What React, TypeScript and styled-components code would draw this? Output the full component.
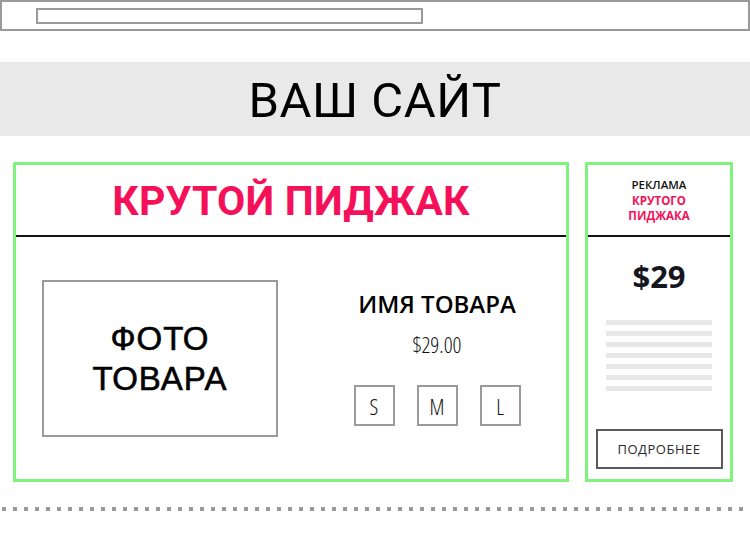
import React from "react"
import styled, { createGlobalStyle } from "styled-components"

const GlobalStyle = createGlobalStyle`
  html, body {
    margin: 0;
    padding: 0;
    background: #fff;
  }
  body {
    width: 750px;
    font-family: Roboto, "Open Sans", sans-serif;
  }
  * {
    box-sizing: border-box;
  }
`

const pink = "#f5115a"
const green = "#82f27f"

const Page = styled.div`
  width: 750px;
  display: flex;
  flex-direction: column;
`

const TopBar = styled.div`
  height: 31px;
  border: 2px solid #9a9a9a;
  padding: 6px 0 0 34px;
`

const AddressField = styled.div`
  width: 387px;
  height: 16px;
  border: 2px solid #9a9a9a;
`

const Hero = styled.header`
  margin-top: 31px;
  height: 74px;
  background: #e9e9e9;
  display: flex;
  align-items: center;
  justify-content: center;
  font-family: Roboto, sans-serif;
  font-size: 49px;
  font-weight: 400;
  color: #000;
  letter-spacing: 0.5px;
  padding-top: 2px;
`

const Row = styled.div`
  margin: 26px 0 0 13px;
  display: flex;
  gap: 16px;
`

const Card = styled.section<{ $width: number }>`
  width: ${p => p.$width}px;
  height: 320px;
  border: 3px solid ${green};
  display: flex;
  flex-direction: column;
`

const CardHead = styled.div`
  height: 72px;
  border-bottom: 2px solid #111;
  display: flex;
  flex-direction: column;
  align-items: center;
  justify-content: center;
  text-align: center;
`

const Title = styled.h1`
  margin: 0;
  font-family: Roboto, sans-serif;
  font-size: 41px;
  font-weight: 700;
  color: ${pink};
  letter-spacing: 0.2px;
  padding-top: 2px;
`

const ProductBody = styled.div`
  display: flex;
  padding: 43px 0 0 26px;
`

const Photo = styled.div`
  width: 236px;
  height: 157px;
  border: 2px solid #9a9a9a;
  display: flex;
  align-items: center;
  justify-content: center;
  text-align: center;
  font-family: "Liberation Sans", Arial, sans-serif;
  font-size: 33px;
  font-weight: 400;
  line-height: 40px;
  letter-spacing: 1px;
  color: #000;
  -webkit-text-stroke: 0.6px #000;
`

const Info = styled.div`
  width: 200px;
  margin-left: 59px;
  display: flex;
  flex-direction: column;
  align-items: center;
  padding-top: 8px;
`

const ProductName = styled.div`
  font-family: "Open Sans", sans-serif;
  font-size: 24px;
  font-weight: 600;
  line-height: 32px;
  color: #000;
`

const Price = styled.div`
  margin-top: 11px;
  font-family: "Open Sans", sans-serif;
  font-stretch: 80%;
  font-size: 22px;
  font-weight: 300;
  line-height: 26px;
  color: #111;
`

const Sizes = styled.div`
  margin-top: 28px;
  display: flex;
  gap: 22px;
`

const SizeBox = styled.div`
  width: 41px;
  height: 41px;
  border: 2px solid #9a9a9a;
  display: flex;
  align-items: center;
  justify-content: center;
  font-family: "Open Sans", sans-serif;
  font-stretch: 80%;
  font-size: 22px;
  font-weight: 300;
  color: #111;
`

const AdTitle = styled.div`
  font-family: "Open Sans", sans-serif;
  font-size: 11.5px;
  line-height: 15.7px;
  font-weight: 600;
  color: #111;
  padding-top: 1px;
`

const Accent = styled.span`
  font-weight: 700;
  color: ${pink};
`

const AdBody = styled.div`
  flex: 1;
  display: flex;
  flex-direction: column;
  align-items: center;
  padding-top: 20px;
`

const AdPrice = styled.div`
  font-family: "Open Sans", sans-serif;
  font-stretch: 90%;
  font-size: 31px;
  font-weight: 700;
  line-height: 38px;
  color: #16161f;
`

const TextLines = styled.div`
  margin-top: 25px;
  width: 106px;
  display: flex;
  flex-direction: column;
  gap: 6px;
`

const TextLine = styled.div`
  height: 5px;
  background: #e8e8e8;
`

const MoreButton = styled.button`
  margin-top: 38px;
  width: 127px;
  height: 40px;
  background: #fff;
  border: 2px solid #5a5a5a;
  font-family: "Open Sans", sans-serif;
  font-size: 13px;
  font-weight: 500;
  color: #2a2a2a;
  letter-spacing: 0.5px;
  padding: 0;
`

const Dotted = styled.div`
  margin: 25px 0 0 2px;
  height: 4px;
  background: repeating-linear-gradient(
    to right,
    #999 0 4px,
    transparent 4px 11px
  );
`

const sizes = ["S", "M", "L"]

const App = (): JSX.Element => {
  return (
    <Page>
      <GlobalStyle />
      <TopBar>
        <AddressField />
      </TopBar>
      <Hero>ВАШ САЙТ</Hero>
      <Row>
        <Card $width={556}>
          <CardHead>
            <Title>КРУТОЙ ПИДЖАК</Title>
          </CardHead>
          <ProductBody>
            <Photo>
              ФОТО
              <br />
              ТОВАРА
            </Photo>
            <Info>
              <ProductName>ИМЯ ТОВАРА</ProductName>
              <Price>$29.00</Price>
              <Sizes>
                {sizes.map(s => (
                  <SizeBox key={s}>{s}</SizeBox>
                ))}
              </Sizes>
            </Info>
          </ProductBody>
        </Card>
        <Card $width={148}>
          <CardHead>
            <AdTitle>
              РЕКЛАМА
              <br />
              <Accent>
                КРУТОГО
                <br />
                ПИДЖАКА
              </Accent>
            </AdTitle>
          </CardHead>
          <AdBody>
            <AdPrice>$29</AdPrice>
            <TextLines>
              {Array.from({ length: 7 }).map((_, i) => (
                <TextLine key={i} />
              ))}
            </TextLines>
            <MoreButton>ПОДРОБНЕЕ</MoreButton>
          </AdBody>
        </Card>
      </Row>
      <Dotted />
    </Page>
  )
}

export default App
